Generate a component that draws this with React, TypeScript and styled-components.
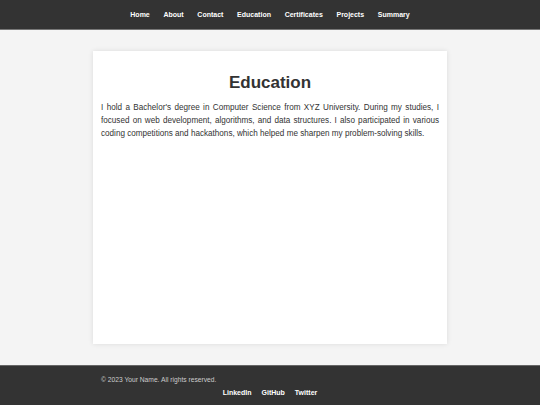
import styled, { createGlobalStyle } from "styled-components";

const GlobalStyle = createGlobalStyle`
  html, body {
    margin: 0;
    padding: 0;
    background: #f4f4f4;
    font-family: "Liberation Sans", Arial, sans-serif;
    color: #333;
  }
`;

const Header = styled.header`
  background: #333;
  height: 29px;
  border-bottom: 1px solid #777;
  display: flex;
  align-items: center;
  justify-content: center;
`;

const Nav = styled.nav`
  display: flex;
  gap: 13.7px;
`;

const NavLink = styled.a`
  color: #fff;
  font-size: 7px;
  font-weight: bold;
  text-decoration: none;
`;

const Main = styled.main`
  padding: 21px 0;
  display: flex;
  justify-content: center;
`;

const Card = styled.section`
  width: 354px;
  min-height: 293px;
  box-sizing: border-box;
  background: #fff;
  padding: 22px 8px 8px;
  box-shadow: 0 0 5px rgba(0, 0, 0, 0.1);
`;

const Title = styled.h2`
  margin: 0 0 8px;
  font-size: 17px;
  font-weight: bold;
  text-align: center;
  line-height: 20px;
  color: #333;
`;

const Text = styled.p`
  margin: 0;
  font-size: 8.13px;
  line-height: 13px;
  text-align: justify;
  color: #333;
`;

const Footer = styled.footer`
  background: #333;
  border-top: 1px solid #666;
  height: 40px;
  box-sizing: border-box;
  padding: 9px 0 0;
  display: flex;
  justify-content: center;
`;

const FooterInner = styled.div`
  width: 354px;
  padding: 0 8px;
  box-sizing: border-box;
`;

const Copyright = styled.p`
  margin: 0;
  font-size: 6.7px;
  line-height: 9px;
  color: #ccc;
`;

const Social = styled.div`
  display: flex;
  justify-content: center;
  gap: 10px;
  margin-top: 4px;
`;

const SocialLink = styled.a`
  color: #fff;
  font-size: 7px;
  font-weight: bold;
  text-decoration: none;
  line-height: 10px;
`;

const navItems = ["Home", "About", "Contact", "Education", "Certificates", "Projects", "Summary"];
const socials = ["LinkedIn", "GitHub", "Twitter"];

export default function App() {
  return (
    <>
      <GlobalStyle />
      <Header>
        <Nav>
          {navItems.map((n) => (
            <NavLink key={n} href="#">
              {n}
            </NavLink>
          ))}
        </Nav>
      </Header>
      <Main>
        <Card>
          <Title>Education</Title>
          <Text>
            I hold a Bachelor's degree in Computer Science from XYZ University. During my studies, I
            focused on web development, algorithms, and data structures. I also participated in various
            coding competitions and hackathons, which helped me sharpen my problem-solving skills.
          </Text>
        </Card>
      </Main>
      <Footer>
        <FooterInner>
          <Copyright>© 2023 Your Name. All rights reserved.</Copyright>
          <Social>
            {socials.map((s) => (
              <SocialLink key={s} href="#">
                {s}
              </SocialLink>
            ))}
          </Social>
        </FooterInner>
      </Footer>
    </>
  );
}
